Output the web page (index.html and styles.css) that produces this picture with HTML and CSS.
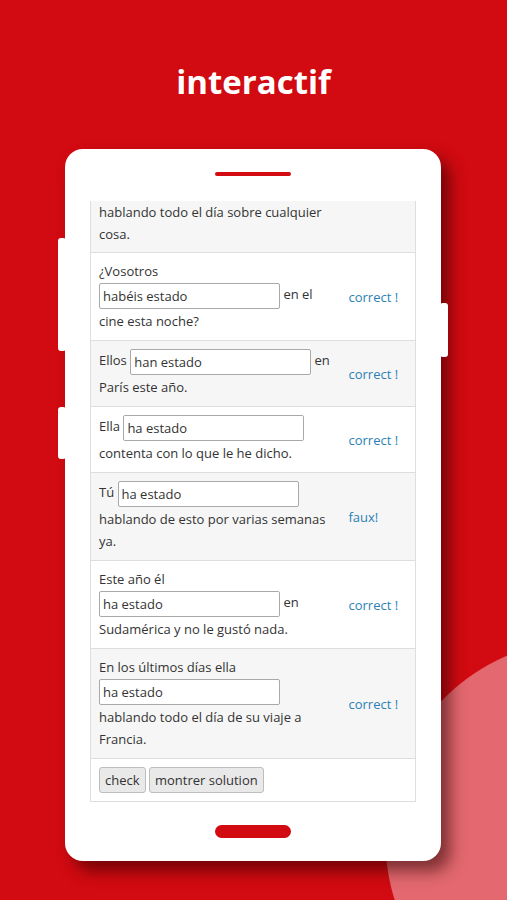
FILE: index.html
```html
<!DOCTYPE html>
<html lang="fr">

<head>
    <meta charset="UTF-8">
    <meta name="viewport" content="width=device-width, initial-scale=1.0">
    <title>interactif</title>
    <link rel="stylesheet" href="styles.css">
</head>

<body>
    <h1 class="title">interactif</h1>

    <div class="phone">
        <span class="side side-l1"></span>
        <span class="side side-l2"></span>
        <span class="side side-r1"></span>

        <div class="speaker"></div>

        <div class="screen">
            <table class="quiz">
                <tr class="odd first">
                    <td class="q">hablando todo el día sobre cualquier<br>cosa.</td>
                    <td class="res"></td>
                </tr>
                <tr>
                    <td class="q">¿Vosotros<br><input type="text" value="habéis estado"> en el<br>cine esta noche?</td>
                    <td class="res">correct !</td>
                </tr>
                <tr class="odd">
                    <td class="q">Ellos <input type="text" value="han estado"> en<br>París este año.</td>
                    <td class="res">correct !</td>
                </tr>
                <tr>
                    <td class="q">Ella <input type="text" value="ha estado"><br>contenta con lo que le he dicho.</td>
                    <td class="res">correct !</td>
                </tr>
                <tr class="odd">
                    <td class="q">Tú <input type="text" value="ha estado"><br>hablando de esto por varias semanas<br>ya.</td>
                    <td class="res">faux!</td>
                </tr>
                <tr>
                    <td class="q">Este año él<br><input type="text" value="ha estado"> en<br>Sudamérica y no le gustó nada.</td>
                    <td class="res">correct !</td>
                </tr>
                <tr class="odd">
                    <td class="q">En los últimos días ella<br><input type="text" value="ha estado"><br>hablando todo el día de su viaje a<br>Francia.</td>
                    <td class="res">correct !</td>
                </tr>
                <tr>
                    <td class="actions" colspan="2">
                        <button>check</button>
                        <button>montrer solution</button>
                    </td>
                </tr>
            </table>
        </div>

        <div class="home"></div>
    </div>
</body>

</html>
```

FILE: styles.css
```css
* {
    padding: 0;
    margin: 0;
    box-sizing: border-box;
}

html,
body {
    width: 507px;
    height: 900px;
    overflow: hidden;
}

body {
    /* fond rouge + grand cercle clair en bas à droite */
    background:
        radial-gradient(circle 202px at 586px 840px, #e3686f 200px, rgba(227, 104, 111, 0) 201px),
        #d20a11;
    font-family: "Open Sans", "Liberation Sans", sans-serif;
}

.title {
    padding-top: 62px;
    height: 102px;
    line-height: 40px;
    text-align: center;
    color: #fff;
    font-size: 33px;
    font-weight: 700;
}

/* le téléphone */
.phone {
    position: relative;
    width: 376px;
    height: 712px;
    margin: 47px 0 0 65px;
    background-color: #fff;
    border-radius: 18px;
    box-shadow: 9px 10px 16px rgba(40, 0, 0, 0.55);
    display: flex;
    flex-direction: column;
    align-items: center;
}

.side {
    position: absolute;
    width: 8px;
    background-color: #fff;
    border-radius: 3px;
}

.side-l1 {
    left: -7px;
    top: 89px;
    height: 113px;
}

.side-l2 {
    left: -7px;
    top: 258px;
    height: 52px;
}

.side-r1 {
    right: -7px;
    top: 154px;
    height: 54px;
}

.speaker {
    width: 76px;
    height: 4px;
    margin-top: 23px;
    border-radius: 2px;
    background-color: #d20a11;
}

.screen {
    width: 326px;
    height: 603px;
    margin-top: 25px;
    overflow: hidden;
}

/* le tableau des exercices (défilé, la première ligne est coupée) */
.quiz {
    width: 326px;
    border-collapse: collapse;
    border: 1px solid #dedede;
    border-top: none;
    color: #333;
    font-size: 13px;
    line-height: 22px;
}

.quiz tr {
    border-top: 1px solid #dedede;
}

.quiz tr.first {
    border-top: none;
}

.quiz tr.odd {
    background-color: #f6f6f6;
}

.quiz .q {
    width: 250px;
    padding: 7px 0 8px 8px;
    white-space: nowrap;
}

.quiz tr.first .q {
    padding-top: 0;
    padding-bottom: 7px;
}

.quiz .res {
    padding: 0 8px;
    color: #2c7fb5;
    font-size: 13px;
    vertical-align: middle;
}

.quiz input {
    width: 181px;
    height: 26px;
    margin: 1px 0;
    padding: 0 3px;
    border: 1px solid #a9a9a9;
    border-radius: 2px;
    background-color: #fff;
    color: #333;
    font: inherit;
    vertical-align: middle;
}

.quiz .actions {
    padding: 8px;
    line-height: 0;
}

.quiz button {
    height: 26px;
    padding: 0 5px;
    border: 1px solid #bdbdbd;
    border-radius: 3px;
    background-color: #e9e9e9;
    color: #333;
    font: inherit;
    font-size: 13px;
    line-height: 24px;
}

.home {
    width: 76px;
    height: 13px;
    margin-top: 21px;
    border-radius: 7px;
    background-color: #d20a11;
}
```
